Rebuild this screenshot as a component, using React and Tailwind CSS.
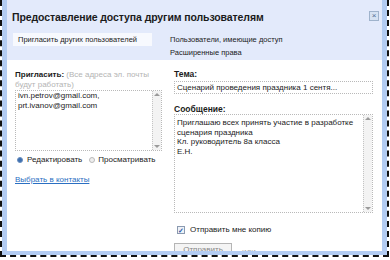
import React from 'react';

function ScrollCol({ h }) {
  // thin dotted scrollbar with tiny arrows
  return (
    <div className="flex w-[9px] flex-col items-center justify-between border-l border-dotted border-[#c4c4c4] bg-[#f3f3f3] py-[2px]" style={{ height: h }}>
      <span className="block h-0 w-0 border-x-[3px] border-b-[3px] border-x-transparent border-b-[#9a9a9a]" />
      <span className="block h-0 w-0 border-x-[3px] border-t-[3px] border-x-transparent border-t-[#9a9a9a]" />
    </div>
  );
}

export default function App() {
  return (
    <div className="relative h-[260px] w-[390px] overflow-hidden bg-white font-['Liberation_Sans',Arial,sans-serif] text-[#1b1b1b]">
      <div className="h-[257px] w-[389px] border-x-2 border-b-2 border-dashed border-[#111]">
        <div className="flex h-full flex-col overflow-hidden border-x-[5px] border-b-[4px] border-[#b3ccf2]">

          {/* header with title and tabs */}
          <div className="h-[60px] shrink-0 bg-[#e3eafb] pl-[5px] pr-[3px]">
            <div className="flex items-start justify-between pt-[11px]">
              <h1 className="text-[10.5px] font-bold leading-[12px] tracking-[-0.1px]">Предоставление доступа другим пользователям</h1>
              <button className="flex h-[10px] w-[10px] items-center justify-center border border-[#9fb3cc] bg-[#d6e2f2] text-[8px] leading-none text-[#4f6d92]">×</button>
            </div>
            <div className="mt-[10px] flex">
              <div className="ml-[1px] flex h-[13px] w-[139px] items-center bg-[#f7f9fe] pl-[5px] text-[7.5px] leading-none">
                Пригласить других пользователей
              </div>
              <div className="ml-[18px] flex flex-col gap-[4px] pt-[2px] text-[7.5px] leading-[9px]">
                <span>Пользователи, имеющие доступ</span>
                <span>Расширенные права</span>
              </div>
            </div>
          </div>

          {/* body */}
          <div className="flex flex-1 gap-[12px] pl-[8px] pr-[7px] pt-[10px]">
            <div className="flex w-[147px] flex-col">
              <p className="text-[8px] leading-[10px]">
                <b>Пригласить:</b>{' '}
                <span className="text-[#b4b4b4]">(Все адреса эл. почты будут работать)</span>
              </p>
              <div className="flex h-[61px] border border-dotted border-[#b9b9b9]">
                <div className="flex-1 px-[2px] text-[8px] leading-[9.5px]">
                  <div>ivn.petrov@gmail.com,</div>
                  <div>prt.ivanov@gmail.com</div>
                </div>
                <ScrollCol h={59} />
              </div>
              <div className="mt-[5px] flex items-center text-[8px] leading-none">
                <span className="ml-[2px] h-[6px] w-[6px] rounded-full border border-[#6b8fbf] bg-[#3d6fb0]" />
                <span className="ml-[4px]">Редактировать</span>
                <span className="ml-[7px] h-[6px] w-[6px] rounded-full border border-[#b9b9b9] bg-[#eee]" />
                <span className="ml-[3px]">Просматривать</span>
              </div>
              <a href="#" className="mt-[12px] text-[8px] leading-none text-[#2b6fc2] underline">Выбрать в контакты</a>
            </div>

            <div className="flex w-[199px] flex-col">
              <b className="text-[8.5px] leading-[9px]">Тема:</b>
              <div className="mt-[2px] flex h-[13px] items-center border border-dotted border-[#b9b9b9] pl-[2px] text-[8px]">
                Сценарий проведения праздника 1 сентя...
              </div>
              <b className="mt-[11px] text-[8.5px] leading-[9px]">Сообщение:</b>
              <div className="flex h-[99px] border border-dotted border-[#b9b9b9]">
                <div className="flex-1 whitespace-nowrap px-[2px] pt-[3px] text-[8px] leading-[9.7px]">
                  <div>Приглашаю всех принять участие в разработке</div>
                  <div>сценария праздника</div>
                  <div>Кл. руководитель 8а класса</div>
                  <div>Е.Н.</div>
                </div>
                <ScrollCol h={97} />
              </div>
              <label className="ml-[3px] mt-[13px] flex items-center gap-[5px] text-[8px] leading-none">
                <span className="flex h-[8px] w-[8px] items-center justify-center border border-[#8b9ab0] bg-[#eef2f8] text-[7px] font-bold leading-none text-[#2d5aa8]">✓</span>
                Отправить мне копию
              </label>
              <div className="mt-[9px] flex items-start">
                <button className="h-[12px] w-[58px] border border-[#b5b5b5] bg-[#f4f4f4] pt-[1px] text-[8px] leading-none text-[#888]">Отправить</button>
                <span className="ml-[10px] pt-[5px] text-[8px] leading-none text-[#aaa]">или</span>
              </div>
            </div>
          </div>

        </div>
      </div>
    </div>
  );
}
